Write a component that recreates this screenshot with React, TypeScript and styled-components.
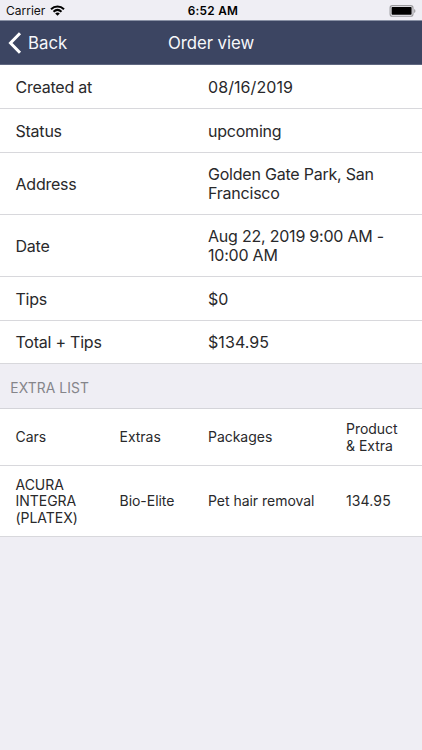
import React from "react";
import styled, { createGlobalStyle } from "styled-components";

const GlobalStyle = createGlobalStyle`
  * { box-sizing: border-box; }
  body { margin: 0; background: #efeef4; font-family: Inter, "Liberation Sans", sans-serif; color: #29292b; }
`;

const Screen = styled.main`
  display: flex;
  flex-direction: column;
  width: 422px;
  height: 750px;
  overflow: hidden;
  background: #efeef4;
`;

const StatusBar = styled.div`
  display: grid;
  grid-template-columns: 1fr auto 1fr;
  align-items: center;
  height: 20px;
  padding: 1px 6px 0 6px;
  font-size: 12px;
  color: #111;
`;

const Carrier = styled.div`
  display: flex;
  align-items: center;
  gap: 5px;
`;

const Clock = styled.div`
  padding-left: 4px;
  font-weight: 600;
  font-size: 11.8px;
  letter-spacing: 0.3px;
  color: #000;
`;

const Battery = styled.svg`
  justify-self: end;
`;

const NavBar = styled.header`
  display: grid;
  grid-template-columns: 1fr auto 1fr;
  align-items: center;
  height: 45px;
  padding: 1px 8px 0;
  background: #3c4562;
  border-top: 1px solid #8991a5;
  border-bottom: 1px solid #5f6780;
  color: #f7f8fb;
`;

const BackButton = styled.button`
  display: flex;
  align-items: center;
  gap: 6px;
  padding: 0;
  border: 0;
  background: none;
  color: inherit;
  font: inherit;
  font-size: 16.8px;
`;

const Title = styled.h1`
  margin: 0;
  font-size: 16.8px;
  font-weight: 400;
  letter-spacing: -0.05px;
`;

const List = styled.dl`
  margin: 0;
  background: #fff;
`;

const Row = styled.div<{ $h: number }>`
  display: grid;
  grid-template-columns: 192.5px 190px;
  align-items: center;
  height: ${(p) => p.$h}px;
  padding: 1.6px 0 0 15.5px;
  border-bottom: 1px solid #d8d8dc;
  font-size: 16px;
  line-height: 19.5px;
`;

const Label = styled.dt`
  letter-spacing: -0.23px;
`;

const Value = styled.dd<{ $numeric?: boolean }>`
  margin: 0;
  white-space: pre-line;
  letter-spacing: ${(p) => (p.$numeric ? 0.08 : -0.22)}px;
`;

const SectionHeader = styled.h2`
  display: flex;
  align-items: center;
  height: 45px;
  margin: 0;
  padding: 3px 0 0 10.3px;
  border-bottom: 1px solid #d4d4d9;
  font-size: 13.8px;
  font-weight: 400;
  letter-spacing: 0.1px;
  color: #85858a;
`;

const Table = styled.div`
  background: #fff;
`;

const TableRow = styled.div<{ $h: number }>`
  display: grid;
  grid-template-columns: 104px 88.5px 138px 70px;
  align-items: center;
  height: ${(p) => p.$h}px;
  padding: 1px 0 0 15.5px;
  border-bottom: 1px solid #d8d8dc;
  font-size: 14px;
  line-height: 16.3px;
`;

const Cell = styled.span<{ $numeric?: boolean }>`
  white-space: pre-line;
  letter-spacing: ${(p) => (p.$numeric ? 0.12 : -0.03)}px;
`;

const details = [
  { label: "Created at", value: "08/16/2019", h: 44, numeric: true },
  { label: "Status", value: "upcoming", h: 44 },
  { label: "Address", value: "Golden Gate Park, San\nFrancisco", h: 62 },
  { label: "Date", value: "Aug 22, 2019 9:00 AM -\n10:00 AM", h: 62 },
  { label: "Tips", value: "$0", h: 44, numeric: true },
  { label: "Total + Tips", value: "$134.95", h: 43, numeric: true },
];

const extras = [
  { h: 57, cells: ["Cars", "Extras", "Packages", "Product\n& Extra"] },
  { h: 71, cells: ["ACURA\nINTEGRA\n(PLATEX)", "Bio-Elite", "Pet hair removal", "134.95"] },
];

export default function App() {
  return (
    <Screen>
      <GlobalStyle />
      <StatusBar>
        <Carrier>
          Carrier
          <svg width="15" height="11" viewBox="0 0 15 11" fill="none" stroke="#000" strokeWidth="2">
            <path d="M1 4.2C4.7.5 10.3.5 14 4.2" />
            <path d="M3.5 6.8c2.4-2.3 5.6-2.3 8 0" />
            <path d="M7.5 10.8 5.2 8.5c1.3-1.2 3.3-1.2 4.6 0z" fill="#000" stroke="none" />
          </svg>
        </Carrier>
        <Clock>6:52 AM</Clock>
        <Battery width="27" height="12" viewBox="0 0 27 12">
          <rect x="1.1" y="0.6" width="22.9" height="10.6" rx="2.3" fill="#efeef4" stroke="#9b9b9e" strokeWidth="1.1" />
          <rect x="2.6" y="2" width="20" height="7.8" rx="0.7" fill="#000" />
          <path d="M25.1 4v4c1.8-.7 1.8-3.3 0-4z" fill="#9b9b9e" />
        </Battery>
      </StatusBar>
      <NavBar>
        <BackButton>
          <svg width="14" height="22" viewBox="0 0 14 22" fill="none" stroke="#fff" strokeWidth="3">
            <path d="M12 1.2 2.5 11l9.5 9.8" />
          </svg>
          Back
        </BackButton>
        <Title>Order view</Title>
      </NavBar>
      <List>
        {details.map((d) => (
          <Row key={d.label} $h={d.h}>
            <Label>{d.label}</Label>
            <Value $numeric={d.numeric}>{d.value}</Value>
          </Row>
        ))}
      </List>
      <SectionHeader>EXTRA LIST</SectionHeader>
      <Table>
        {extras.map((row) => (
          <TableRow key={row.cells[0]} $h={row.h}>
            {row.cells.map((cell) => (
              <Cell key={cell} $numeric={/^[\d.]+$/.test(cell)}>
                {cell}
              </Cell>
            ))}
          </TableRow>
        ))}
      </Table>
    </Screen>
  );
}
